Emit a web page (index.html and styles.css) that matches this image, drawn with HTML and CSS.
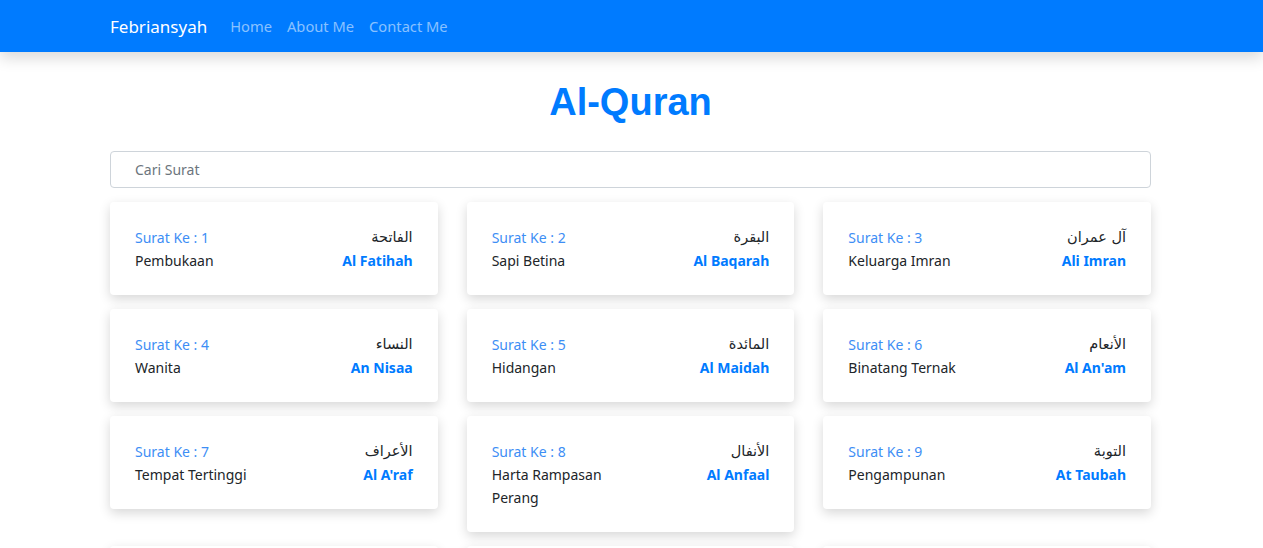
FILE: index.html
```html
<!DOCTYPE html>
<html lang="id">
<head>
<meta charset="utf-8">
<title>Al-Quran</title>
<link rel="stylesheet" href="styles.css">
</head>
<body>
<nav class="navbar">
  <div class="container nav-inner">
    <a class="brand" href="#">Febriansyah</a>
    <a class="nav-link" href="#">Home</a>
    <a class="nav-link" href="#">About Me</a>
    <a class="nav-link" href="#">Contact Me</a>
  </div>
</nav>
<main class="container">
  <h1 class="title">Al-Quran</h1>
  <input class="search" type="text" placeholder="Cari Surat">
  <div class="grid">
    <div class="card"><div class="left"><div class="num">Surat Ke : 1</div><div class="arti">Pembukaan</div></div><div class="right"><div class="ar">الفاتحة</div><div class="name">Al Fatihah</div></div></div>
    <div class="card"><div class="left"><div class="num">Surat Ke : 2</div><div class="arti">Sapi Betina</div></div><div class="right"><div class="ar">البقرة</div><div class="name">Al Baqarah</div></div></div>
    <div class="card"><div class="left"><div class="num">Surat Ke : 3</div><div class="arti">Keluarga Imran</div></div><div class="right"><div class="ar">آل عمران</div><div class="name">Ali Imran</div></div></div>
    <div class="card"><div class="left"><div class="num">Surat Ke : 4</div><div class="arti">Wanita</div></div><div class="right"><div class="ar">النساء</div><div class="name">An Nisaa</div></div></div>
    <div class="card"><div class="left"><div class="num">Surat Ke : 5</div><div class="arti">Hidangan</div></div><div class="right"><div class="ar">المائدة</div><div class="name">Al Maidah</div></div></div>
    <div class="card"><div class="left"><div class="num">Surat Ke : 6</div><div class="arti">Binatang Ternak</div></div><div class="right"><div class="ar">الأنعام</div><div class="name">Al An'am</div></div></div>
    <div class="card"><div class="left"><div class="num">Surat Ke : 7</div><div class="arti">Tempat Tertinggi</div></div><div class="right"><div class="ar">الأعراف</div><div class="name">Al A'raf</div></div></div>
    <div class="card"><div class="left"><div class="num">Surat Ke : 8</div><div class="arti">Harta Rampasan<br>Perang</div></div><div class="right"><div class="ar">الأنفال</div><div class="name">Al Anfaal</div></div></div>
    <div class="card"><div class="left"><div class="num">Surat Ke : 9</div><div class="arti">Pengampunan</div></div><div class="right"><div class="ar">التوبة</div><div class="name">At Taubah</div></div></div>
    <div class="card"><div class="left"><div class="num">Surat Ke : 10</div><div class="arti">Nabi Yunus</div></div><div class="right"><div class="ar">يونس</div><div class="name">Yunus</div></div></div>
    <div class="card"><div class="left"><div class="num">Surat Ke : 11</div><div class="arti">Nabi Hud</div></div><div class="right"><div class="ar">هود</div><div class="name">Huud</div></div></div>
    <div class="card"><div class="left"><div class="num">Surat Ke : 12</div><div class="arti">Nabi Yusuf</div></div><div class="right"><div class="ar">يوسف</div><div class="name">Yusuf</div></div></div>
  </div>
</main>
</body>
</html>
```
FILE: styles.css
```css
* { box-sizing: border-box; }
html, body { margin: 0; padding: 0; }
body {
  font-family: "Noto Sans", "DejaVu Sans", sans-serif;
  font-size: 14px;
  color: #212529;
  background: #fff;
}
.container {
  width: 1071px;
  margin: 0 auto;
  padding: 0 16px 0 14px;
}
.navbar {
  background: #007bff;
  height: 52px;
  box-shadow: 0 6px 14px rgba(0,0,0,0.15);
}
.nav-inner {
  display: flex;
  align-items: center;
  height: 52px;
  gap: 15px;
}
.brand {
  color: #fff;
  font-size: 17px;
  text-decoration: none;
  margin-right: 8px;
}
.nav-link {
  color: rgba(255,255,255,0.55);
  font-size: 14.7px;
  text-decoration: none;
}
.title {
  font-family: "Liberation Sans", Arial, sans-serif;
  font-weight: 700;
  font-size: 38px;
  color: #007bff;
  text-align: center;
  margin: 0;
  line-height: 44px;
  height: 99px;
  padding-top: 28px;
}
.search {
  display: block;
  width: 100%;
  height: 37px;
  border: 1px solid #ced4da;
  border-radius: 4px;
  padding: 0 24px;
  font-family: inherit;
  font-size: 14px;
  color: #495057;
}
.search::placeholder { color: #6c757d; }
.grid {
  margin-top: 14px;
  display: grid;
  grid-template-columns: repeat(3, 1fr);
  column-gap: 29px;
  row-gap: 14px;
  align-items: start;
}
.card {
  display: flex;
  justify-content: space-between;
  padding: 24px 25px 23px;
  border-radius: 4px;
  background: #fff;
  box-shadow: 0 4px 12px rgba(0,0,0,0.16);
  line-height: 23px;
}
.num { color: #3d8ef5; }
.arti { color: #212529; }
.right { text-align: right; }
.ar { font-family: "DejaVu Sans", sans-serif; font-size: 14.5px; color: #212529; }
.name { color: #007bff; font-weight: 700; }
```
